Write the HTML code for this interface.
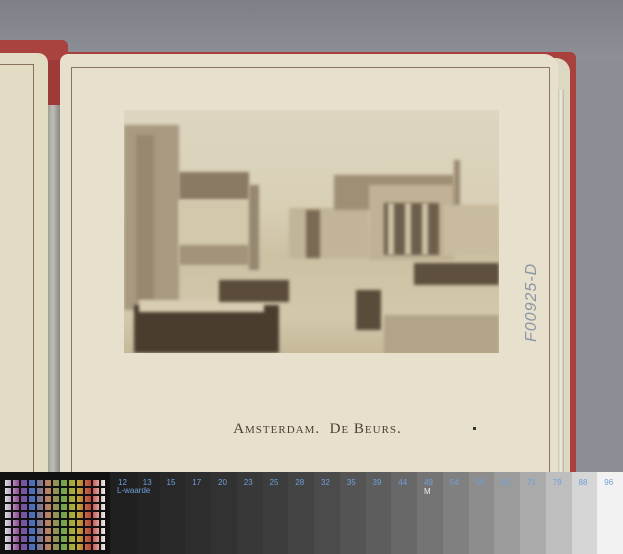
<!DOCTYPE html>
<html><head><style>
*{margin:0;padding:0;box-sizing:border-box}
body{width:623px;height:554px;overflow:hidden;background:#8b8e94;position:relative;font-family:"Liberation Serif",serif}
.a{position:absolute}
.ph div{filter:blur(1.5px)}
</style></head><body>
<div class="a" style="left:0;top:0;width:623px;height:60px;background:linear-gradient(#7d8087,#8d9096)"></div>
<div class="a" style="left:0;top:40px;width:68px;height:30px;background:#a8433f;border-radius:0 6px 0 0"></div>
<div class="a" style="left:47px;top:60px;width:14px;height:45px;background:#9e3a37"></div>
<div class="a" style="left:47px;top:105px;width:12px;height:370px;background:linear-gradient(90deg,#9a9a92,#c0bfb6,#8e8d86)"></div>
<div class="a" style="left:0;top:53px;width:48px;height:420px;background:#e2dcc4;border-radius:0 10px 0 0"></div>
<div class="a" style="left:0;top:64px;width:34px;height:410px;border:1px solid #8a6f5c;border-left:none;border-bottom:none"></div>
<div class="a" style="left:62px;top:52px;width:514px;height:423px;background:#a8403c;border-radius:4px 6px 0 0"></div>
<div class="a" style="left:62px;top:58px;width:508px;height:417px;background:#ddd8c2;border-radius:8px 14px 0 0"></div>
<div class="a" style="left:558px;top:90px;width:6px;height:385px;background:linear-gradient(90deg,#c9c6b2,#eeeede,#b8b39e)"></div>
<div class="a" style="left:60px;top:54px;width:498px;height:420px;background:#e6e0cc;border-radius:8px 14px 0 0"></div>
<div class="a" style="left:71px;top:67px;width:479px;height:408px;border:1px solid #8a7461;border-bottom:none"></div>
<div class="a ph" style="left:124px;top:110px;width:375px;height:243px;background:linear-gradient(#ddd6c0 0,#d8cfb5 40%,#cdc1a3 60%,#d3c8ab 85%,#c6b99a 100%);overflow:hidden">
 <div class="a" style="left:0;top:15px;width:55px;height:185px;background:#a89a80"></div>
 <div class="a" style="left:12px;top:25px;width:18px;height:165px;background:#978870"></div>
 <div class="a" style="left:55px;top:62px;width:70px;height:28px;background:#8a7a63"></div>
 <div class="a" style="left:55px;top:90px;width:70px;height:65px;background:#d3c8ac"></div>
 <div class="a" style="left:55px;top:135px;width:70px;height:20px;background:#a3937a"></div>
 <div class="a" style="left:125px;top:75px;width:10px;height:85px;background:#968770"></div>
 <div class="a" style="left:165px;top:98px;width:80px;height:50px;background:#c1b497"></div>
 <div class="a" style="left:182px;top:100px;width:14px;height:48px;background:#7a6a55"></div>
 <div class="a" style="left:210px;top:65px;width:120px;height:35px;background:#9f8f75"></div>
 <div class="a" style="left:245px;top:75px;width:85px;height:75px;background:#c0b295"></div>
 <div class="a" style="left:260px;top:93px;width:55px;height:52px;background:#6e5f4c"></div>
 <div class="a" style="left:264px;top:93px;width:6px;height:52px;background:#cfc3a7"></div>
 <div class="a" style="left:281px;top:93px;width:6px;height:52px;background:#cfc3a7"></div>
 <div class="a" style="left:298px;top:93px;width:6px;height:52px;background:#cfc3a7"></div>
 <div class="a" style="left:320px;top:95px;width:55px;height:50px;background:#c8bb9e"></div>
 <div class="a" style="left:330px;top:50px;width:6px;height:45px;background:#9a8a72"></div>
 <div class="a" style="left:10px;top:195px;width:145px;height:48px;background:#4a3d2f"></div>
 <div class="a" style="left:15px;top:190px;width:125px;height:12px;background:#d8cdb3"></div>
 <div class="a" style="left:95px;top:170px;width:70px;height:22px;background:#5a4b3b"></div>
 <div class="a" style="left:290px;top:153px;width:85px;height:22px;background:#5e4f3f"></div>
 <div class="a" style="left:232px;top:180px;width:25px;height:40px;background:#5a4b3b"></div>
 <div class="a" style="left:260px;top:205px;width:115px;height:40px;background:#b2a486"></div>
</div>
<div class="a" style="left:0;top:421px;width:623px;text-align:center;padding-left:12px;font-size:15px;letter-spacing:1px;color:#4a3f35;font-variant:small-caps">Amsterdam. &nbsp;De Beurs.</div>
<div class="a" style="left:473px;top:427px;width:3px;height:3px;background:#333"></div>
<div class="a" style="left:523px;top:342px;transform:rotate(-90deg);transform-origin:left top;font-family:'Liberation Sans',sans-serif;font-size:16px;color:#8b96a3;font-style:italic;letter-spacing:1px">F00925-D</div>
<div class="a" style="left:0;top:472px;width:623px;height:82px;background:#1a1a1a"></div>
<div class="a" style="left:0;top:472px;width:110px;height:82px;background:#111">
 <div class="a" style="left:5px;top:8px;width:100px;height:70px;background:repeating-linear-gradient(90deg,transparent 0 6px,#111 6px 8px),linear-gradient(90deg,#ddd,#8a4a90,#4a70c0,#c08060,#70a050,#c0b030,#c04040,#eee);"></div>
 <div class="a" style="left:5px;top:8px;width:100px;height:70px;background:repeating-linear-gradient(transparent 0 6px,#111 6px 8px)"></div>
</div>
<div class="a" style="left:110px;top:472px;width:513px;height:82px;display:flex;font-family:'Liberation Sans',sans-serif;font-size:8px;color:#6fa0d8">
<div style="flex:1;background:#202020;padding:6px 8px">12</div><div style="flex:1;background:#242424;padding:6px 5px">13</div><div style="flex:1;background:#282828;padding:6px 7px">15</div><div style="flex:1;background:#2d2d2d;padding:6px 7px">17</div><div style="flex:1;background:#323232;padding:6px 7px">20</div><div style="flex:1;background:#383838;padding:6px 7px">23</div><div style="flex:1;background:#3d3d3d;padding:6px 7px">25</div><div style="flex:1;background:#444;padding:6px 7px">28</div><div style="flex:1;background:#4b4b4b;padding:6px 7px">32</div><div style="flex:1;background:#545454;padding:6px 7px">35</div><div style="flex:1;background:#5d5d5d;padding:6px 7px">39</div><div style="flex:1;background:#686868;padding:6px 7px">44</div><div style="flex:1;background:#747474;padding:6px 7px">49<br><span style="color:#eee">M</span></div><div style="flex:1;background:#808080;padding:6px 7px">54</div><div style="flex:1;background:#8d8d8d;padding:6px 7px">59</div><div style="flex:1;background:#9b9b9b;padding:6px 7px">65</div><div style="flex:1;background:#aaa;padding:6px 7px">71</div><div style="flex:1;background:#bebebe;padding:6px 7px">79</div><div style="flex:1;background:#d6d6d6;padding:6px 7px">88</div><div style="flex:1;background:#f2f2f2;padding:6px 7px">96</div>
</div>
<div class="a" style="left:117px;top:486px;font-family:'Liberation Sans',sans-serif;font-size:8px;color:#6fa0d8">L-waarde</div>
</body></html>
